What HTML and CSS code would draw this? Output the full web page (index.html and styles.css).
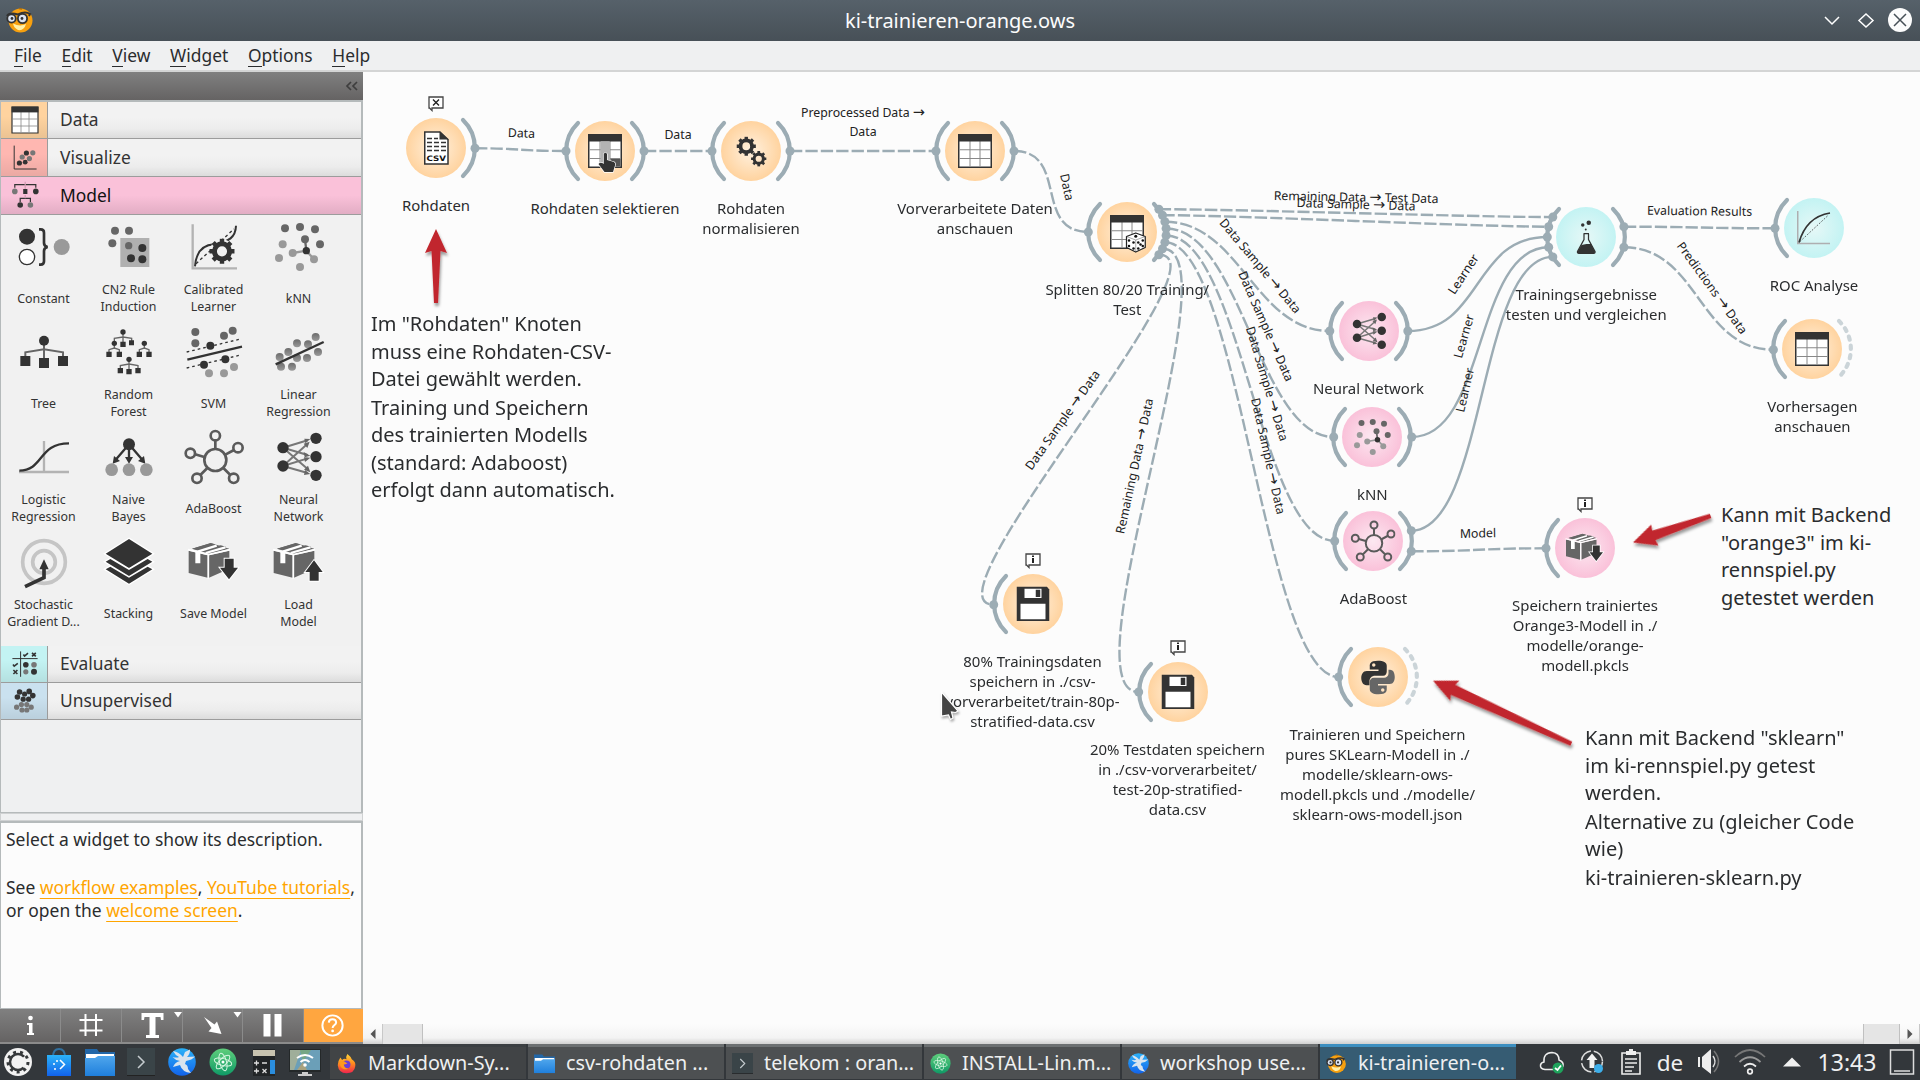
FILE: index.html
```html
<!DOCTYPE html>
<html lang="de">
<head>
<meta charset="utf-8">
<title>ki-trainieren-orange.ows</title>
<link rel="stylesheet" href="styles.css">
</head>
<body>
<svg class="defs" width="0" height="0" aria-hidden="true">
  <defs>
    <radialGradient id="g-data"><stop offset="0" stop-color="#fff1df"/><stop offset="1" stop-color="#ffd39f"/></radialGradient>
    <radialGradient id="g-model"><stop offset="0" stop-color="#fce8f1"/><stop offset="1" stop-color="#fac1d9"/></radialGradient>
    <radialGradient id="g-eval"><stop offset="0" stop-color="#e6f8f7"/><stop offset="1" stop-color="#c3f3f3"/></radialGradient>
    <linearGradient id="g-dot" x1="0" y1="0" x2="0" y2="1"><stop offset="0" stop-color="#6c6c6c"/><stop offset="1" stop-color="#9a9a9a"/></linearGradient>
    <linearGradient id="g-folder" x1="0" y1="0" x2="0" y2="1"><stop offset="0" stop-color="#4fa6ec"/><stop offset="1" stop-color="#1f7fdc"/></linearGradient>
    <linearGradient id="g-atom" x1="0" y1="0" x2="0" y2="1"><stop offset="0" stop-color="#5fce7c"/><stop offset="1" stop-color="#0f9a66"/></linearGradient>
    <linearGradient id="g-bird" x1="0" y1="0" x2="0" y2="1"><stop offset="0" stop-color="#2bb2f8"/><stop offset="1" stop-color="#1262ea"/></linearGradient>
    <linearGradient id="g-fox" x1="0" y1="0" x2="0" y2="1"><stop offset="0" stop-color="#ffd43a"/><stop offset=".5" stop-color="#ff8a1d"/><stop offset="1" stop-color="#f0254e"/></linearGradient>
    <filter id="shadow" x="-20%" y="-50%" width="140%" height="200%"><feDropShadow dx="1" dy="3" stdDeviation="1.5" flood-opacity=".4"/></filter>
  </defs>

  <symbol id="gear" viewBox="-50 -50 100 100"><circle r="29" fill="none" stroke-width="19" stroke="currentColor"/><g stroke="currentColor" stroke-width="17"><path d="M0-30V-48M0 30V48M-30 0H-48M30 0H48M-21-21-34-34M21 21 34 34M-21 21-34 34M21-21 34-34"/></g></symbol>

  <symbol id="i-constant" viewBox="-90 -90 180 180"><circle cx="-51" cy="-31" r="24" fill="#333"/><circle cx="-51" cy="30" r="23" fill="#fff" stroke="#333" stroke-width="4"/><path d="M-15-53H-10Q0-53 0-43V-12Q0-2 11 0 0 2 0 12V43Q0 53-10 53H-15" fill="none" stroke="#333" stroke-width="8"/><circle cx="53" r="24" fill="#999"/></symbol>
  <symbol id="i-cn2" viewBox="-90 -90 180 180"><path fill="#b0b0b0" d="M-26-27H61V60H-26z"/><g fill="#666"><circle cx="-42" cy="-49" r="12"/><circle cy="-49" r="12"/><circle cx="-50" cy="-11" r="12"/><circle cx="-1" cy="-4" r="11"/></g><g fill="#333"><circle cx="40" cy="3" r="12"/><circle cx="6" cy="34" r="12"/><circle cx="40" cy="37" r="12"/></g></symbol>
  <symbol id="i-calibrated" viewBox="-90 -90 180 180"><path d="M-64-68V64H69" fill="none" stroke="#b3b3b3" stroke-width="7"/><path d="M-54 50 60-54" stroke="#333" stroke-width="4" stroke-dasharray="9 8"/><path d="M-57 58Q-52-5 0-8C45-15 65-30 66-64" fill="none" stroke="#333" stroke-width="6"/><circle cx="24" cy="13" r="36" fill="#f1f1f1"/><use href="#gear" x="-15" y="-26" width="78" height="78" color="#333"/></symbol>
  <symbol id="i-knn" viewBox="-90 -90 180 180"><path d="M22 11 18-23" stroke="#666" stroke-width="7"/><path d="M-19 18 22 11 45 37" fill="none" stroke="#999" stroke-width="7"/><g fill="#666"><circle cx="-42" cy="-56" r="12"/><circle cx="3" cy="-60" r="12"/><circle cx="48" cy="-53" r="12"/><circle cx="18" cy="-23" r="12"/><circle cx="63" cy="-8" r="12"/></g><g fill="#999"><circle cx="-49" cy="-8" r="12"/><circle cx="-19" cy="18" r="12"/><circle cx="-60" cy="33" r="12"/><circle cx="45" cy="37" r="12"/><circle cx="3" cy="60" r="12"/></g><circle cx="22" cy="11" r="11" fill="#333"/></symbol>
  <symbol id="i-tree" viewBox="-90 -90 180 180"><path d="M-56 20V1L0-8 57 1V20M0-30V25" fill="none" stroke="#666" stroke-width="6"/><circle cy="-34" r="15" fill="#333"/><path fill="#333" d="M-71 12h30v30h-30zM-15 18h30v30h-30zM42 12h30v30h-30z"/></symbol>
  <symbol id="i-forest" viewBox="-90 -90 180 180"><path d="M-44-26V-41L-18-45 8-41V-26M-18-60V-25M-60 7V-7L-44-12-29-7V7M-44-26V-12M31 7V-7L46-12 60-7V7M46-26V-12M-26 56V41L0 36 27 41V56M0 22V56" fill="none" stroke="#666" stroke-width="4"/><g fill="#333"><circle cx="-18" cy="-60" r="8"/><circle cx="-44" cy="-26" r="8"/><circle cx="46" cy="-26" r="8"/><circle cy="22" r="8"/><path d="M-26-31h16v16h-16zM0-35h15v15H0zM-68-1h16v16h-16zM-37-1h16v16h-16zM23-1h16v16H23zM52-1h16v16H52zM-34 48h16v16h-16zM-8 51H8v16H-8zM19 48h16v16H19z"/></g></symbol>
  <symbol id="i-svm" viewBox="-90 -90 180 180"><path d="M-82 0 80-39M-82 48 80 9" stroke="#333" stroke-width="4" stroke-dasharray="8 9"/><path d="M-80 23 84-16" stroke="#333" stroke-width="7"/><g fill="#666"><circle cx="-56" cy="-60" r="12"/><circle cx="-56" cy="-26" r="12"/><circle cx="30" cy="-49" r="12"/><circle cx="56" cy="-64" r="12"/></g><g fill="#333"><circle cx="-11" cy="-19" r="12"/><circle cx="34" cy="22" r="12"/><circle cx="-30" cy="38" r="12"/></g><g fill="#999"><circle cx="60" cy="45" r="12"/><circle cx="-15" cy="64" r="12"/><circle cx="30" cy="64" r="12"/></g></symbol>
  <symbol id="i-linreg" viewBox="-90 -90 180 180"><g fill="url(#g-dot)"><circle cx="-58" cy="15" r="12"/><circle cx="-32" r="12"/><circle cx="-6" cy="-26" r="12"/><circle cx="27" cy="-23" r="12"/><circle cx="50" cy="-45" r="12"/><circle cx="57" r="12"/><circle cx="24" cy="18" r="12"/><circle cx="-6" cy="18" r="12"/><circle cx="-21" cy="44" r="12"/><circle cx="-54" cy="44" r="12"/></g><path d="M-70 37 74-30" stroke="#333" stroke-width="7"/></symbol>
  <symbol id="i-logreg" viewBox="-90 -90 180 180"><path d="M0-48V43M-75 45H75" stroke="#b3b3b3" stroke-width="7"/><path d="M-74 41C0 40-18-41 75-41" fill="none" stroke="#333" stroke-width="7"/></symbol>
  <symbol id="i-bayes" viewBox="-90 -90 180 180"><g stroke="#333" stroke-width="7"><path d="M0-38-38 6M0-38V6M0-38 38 6"/></g><g fill="#333"><circle cy="-38" r="18"/><path d="M-49 20-45-3-27 12zM0 20-12 0H12zM49 20 45-3 27 12z"/></g><g fill="#999"><circle cx="-52" cy="38" r="19"/><circle cy="38" r="19"/><circle cx="52" cy="38" r="19"/></g></symbol>
  <symbol id="i-ada" viewBox="-90 -90 180 180"><g fill="none" stroke="#5a5a5a" stroke-width="8"><circle cx="4" cy="9" r="33"/><circle cx="4" cy="-64" r="14"/><circle cx="72" cy="-28" r="14"/><circle cx="59" cy="64" r="14"/><circle cx="-51" cy="64" r="14"/><circle cx="-71" cy="-11" r="14"/><path d="M4-50V-24M60-21 34-7M49 54 28 33M-41 54-20 33M-57-8-29 0"/></g></symbol>
  <symbol id="i-neural" viewBox="-90 -90 180 180"><g stroke="#777" stroke-width="6"><path d="M-48-28 26-50M-48-28 26-6M-48-28 26 36M-48 27 24-38M-48 27 26 4M-48 27 26 48"/></g><path fill="#666" d="M34-54 16-55 19-41zM34-4 14-15 17 1zM34 46 27 26 15 38zM32-46 14-40 25-27zM34 2 15 1 18 15zM34 51 18 40 15 54z"/><g fill="#333"><circle cx="-48" cy="-28" r="17"/><circle cx="-48" cy="27" r="17"/><circle cx="51" cy="-56" r="17"/><circle cx="51" cy="-1" r="17"/><circle cx="51" cy="55" r="17"/></g></symbol>
  <symbol id="i-sgd" viewBox="-90 -90 180 180"><g fill="none" stroke="#c5c5c5" stroke-width="11"><circle r="64"/><circle r="34"/></g><path d="M-57 74 0 47V12" fill="none" stroke="#333" stroke-width="11"/><path fill="#333" d="M0-8 14 22H-14z"/></symbol>
  <symbol id="i-stack" viewBox="-90 -90 180 180"><path fill="#333" stroke="#fff" stroke-width="8" paint-order="stroke" d="M0 65-70 22-56 14 0 47 56 14 70 22zM0 42-70-1-56-9 0 24 56-9 70-1zM0-69 70-25 0 18-70-25z"/></symbol>
  <symbol id="i-box" viewBox="-90 -90 180 180"><path fill="#666" d="M-76-34-19-20V47L-76 33zM-15-20 46-34V20L-15 47zM-66-40-10-56 4-53-52-37zM-40-33 20-50 36-46-24-29z"/><path fill="#666" d="M-66-40-10-57 46-40-12-24z"/><path fill="#fff" d="M-56-32-41-28V4H-56z"/><path d="M-49-31 8-49M-25-27 34-44" stroke="#fff" stroke-width="7" fill="none"/><path d="M-17-22V50M-78-37-17-22 48-37" fill="none" stroke="#fff" stroke-width="5"/></symbol>
  <symbol id="i-save" viewBox="-90 -90 180 180"><use href="#i-box" x="-90" y="-90" width="180" height="180"/><path fill="#333" stroke="#fff" stroke-width="6" paint-order="stroke" d="M32-10H59V17H72L45 52 18 17H32z"/></symbol>
  <symbol id="i-load" viewBox="-90 -90 180 180"><use href="#i-box" x="-90" y="-90" width="180" height="180"/><path fill="#333" stroke="#fff" stroke-width="6" paint-order="stroke" d="M32 56H59V30H71L45-5 19 30H32z"/></symbol>
  <symbol id="i-table" viewBox="-90 -90 180 180"><path fill="#fff" stroke="#333" stroke-width="6" d="M-65-65H65V65H-65z"/><path d="M-62-5H62M-62 30H62M-20-40V62M20-40V62" stroke="#888" stroke-width="4"/><path fill="#333" d="M-67-67H67V-38H-67z"/></symbol>
  <symbol id="i-select" viewBox="-90 -90 180 180"><use href="#i-table" x="-90" y="-90" width="180" height="180"/><path fill="#b3b3b3" d="M-18-38H20V62H-18z"/><path fill="#555" d="M22 32H62V62H22z"/><path fill="#333" stroke="#fff" stroke-width="5" paint-order="stroke" d="M-5 12Q2 2 8 12V36L36 44Q43 48 40 58L32 84H-2L-26 52Q-18 42-5 52z"/></symbol>
  <symbol id="i-scatter" viewBox="-90 -90 180 180"><path d="M-54-57V60H58" fill="none" stroke="#333" stroke-width="5"/><g fill="#777"><circle cx="-14" r="13"/><circle cx="39" cy="-21" r="13"/><circle cx="22" cy="8" r="13"/></g><g fill="#333"><circle cx="-28" cy="30" r="13"/><circle cx="7" cy="-20" r="13"/><circle cx="1" cy="26" r="12"/></g></symbol>
  <symbol id="i-model" viewBox="-90 -90 180 180"><path d="M-51-36V-52H54V-36M-24 35V17H27V35" fill="none" stroke="#333" stroke-width="6"/><path d="M1-66V-30M1 0V16" stroke="#d59db5" stroke-width="6"/><g fill="#777"><circle cx="-51" cy="-18" r="14"/><circle cx="27" cy="50" r="14"/></g><g fill="#333"><circle cx="54" cy="-18" r="14"/><circle cx="-24" cy="50" r="14"/><path d="M-9-30H12V-5H-9z"/></g></symbol>
  <symbol id="i-evaluate" viewBox="-90 -90 180 180"><path d="M-22-63V64M-63-27H63" stroke="#333" stroke-width="5"/><path d="M-8-48-2-40 15-54M-60 3-54 11-36-3M35-56 54-38M54-56 35-38M-58 30-38 50M-38 30-58 50" fill="none" stroke="#333" stroke-width="8"/><g fill="#333"><circle cx="4" cy="4" r="14"/><circle cx="45" cy="39" r="15"/></g><g fill="#777"><circle cx="45" cy="4" r="14"/><circle cx="4" cy="39" r="13"/></g></symbol>
  <symbol id="i-unsup" viewBox="-90 -90 180 180"><g fill="#333"><circle cx="-27" cy="-45" r="14"/><circle cx="21" cy="-48" r="14"/><circle cx="-2" cy="-35" r="13"/><circle cx="39" cy="-27" r="14"/><circle cx="-38" cy="-20" r="14"/><circle cx="-9" cy="-9" r="13"/><circle cx="18" cy="-9" r="13"/></g><g fill="#777"><circle cx="-18" cy="18" r="13"/><circle cx="9" cy="18" r="13"/><circle cx="31" cy="31" r="13"/><circle cx="-42" cy="31" r="13"/><circle cx="-15" cy="45" r="13"/><circle cx="9" cy="45" r="13"/></g></symbol>
  <symbol id="i-csv" viewBox="-90 -90 180 180"><path fill="#fff" stroke="#333" stroke-width="6" d="M-45-64H16L48-34V64H-45z"/><path fill="#333" d="M14-66 50-34H14z"/><path d="M-36-38H8M-36-22H40M-36-6H40M-36 10H40" stroke="#333" stroke-width="6" stroke-dasharray="20 8"/></symbol>
  <symbol id="i-gears" viewBox="-90 -90 180 180"><use href="#gear" x="-59" y="-59" width="80" height="80" color="#333"/><use href="#gear" x="-1" y="-1" width="64" height="64" color="#333"/></symbol>
  <symbol id="i-split" viewBox="-90 -90 180 180"><use href="#i-table" x="-90" y="-90" width="180" height="180"/><path fill="#fff" stroke="#222" stroke-width="5" stroke-linejoin="round" d="M35 4 73 18V62L35 80-2 62V18z"/><path d="M-2 18 35 32 73 18M35 32V80" fill="none" stroke="#555" stroke-width="2"/><g fill="#111"><circle cx="35" cy="17" r="6"/><circle cx="8" cy="34" r="5"/><circle cx="26" cy="42" r="5"/><circle cx="8" cy="56" r="5"/><circle cx="26" cy="66" r="5"/><circle cx="45" cy="42" r="5"/><circle cx="63" cy="34" r="5"/><circle cx="54" cy="50" r="5"/><circle cx="45" cy="66" r="5"/><circle cx="63" cy="56" r="5"/></g></symbol>
  <symbol id="i-flask" viewBox="-90 -90 180 180"><path d="M-10-14H12M-8-12V10L-34 58Q-36 65-28 65H30Q38 65 36 58L10 10V-12" fill="none" stroke="#333" stroke-width="5"/><path fill="#333" d="M-18 32 2 28 20 28 36 58Q38 66 30 66H-28Q-36 66-34 58z"/><circle cx="-13" cy="-48" r="7" fill="#333"/><circle cx="11" cy="-57" r="9" fill="#333"/><circle cx="-1" cy="-30" r="4" fill="#333"/></symbol>
  <symbol id="i-roc" viewBox="-90 -90 180 180"><path d="M-65-68V62H64" fill="none" stroke="#aeaeb0" stroke-width="6"/><path d="M-56 54 56-50" stroke="#333" stroke-width="3" stroke-dasharray="7 6"/><path d="M-60 58Q-30-45 64-60" fill="none" stroke="#333" stroke-width="7"/></symbol>
  <symbol id="i-floppy" viewBox="-90 -90 180 180"><path fill="#333" d="M-65-69H56L65-58V68H-65z"/><path fill="#fff" d="M-34-61H34V-24H-34zM-50-1H50V61H-50z"/><path fill="#333" d="M11-57H29V-28H11z"/></symbol>
  <symbol id="i-python" viewBox="-90 -90 180 180"><path fill="#333" d="M0-65C-34-65-33-50-33-42V-30H2V-24H-45C-60-24-67-10-67 4S-60 33-46 33H-34V16C-34 4-24-5-12-5H20C30-5 35-13 35-22V-45C35-58 22-65 0-65zM-17-55A7 7 0 1 1-17-41 7 7 0 1 1-17-55z"/><path fill="#666" d="M2 69C36 69 35 54 35 46V34H0V28H47C62 28 67 14 67 0S62-29 48-29H42V-14C42-4 34 3 24 3H-16C-26 3-33 10-33 20V48C-33 61-22 69 2 69zM19 59A7 7 0 1 1 19 45 7 7 0 1 1 19 59z"/></symbol>

  <symbol id="arc-l" viewBox="-50 -47 100 94"><path d="M-27-28A39 39 0 0 0-27 28" fill="none" stroke="#9cacb4" stroke-width="4.2" stroke-linecap="round"/></symbol>
  <symbol id="arc-r" viewBox="-50 -47 100 94"><path d="M27-28A39 39 0 0 1 27 28" fill="none" stroke="#9cacb4" stroke-width="4.2" stroke-linecap="round"/></symbol>
  <symbol id="arc-open" viewBox="-50 -47 100 94"><path d="M27-28A39 39 0 0 1 27 28" fill="none" stroke="#cbd4d8" stroke-width="4.2" stroke-linecap="round" stroke-dasharray="3.2 6.1"/></symbol>
  <symbol id="bubble" viewBox="0 0 16 16"><path fill="#fff" stroke="#444" stroke-width="1.300" d="M1 1H15V12H4V14.500L1.500 12H1z"/></symbol>

  <symbol id="orange" viewBox="0 0 28 28"><circle cx="14.500" cy="14.500" r="12" fill="#f7a00f"/><path d="M13 2.500l3 .500" stroke="#a86c10" stroke-width="1.500"/><path d="M7 17.500Q14 21 20 18 18 25 12 24 8 22 7 17.500z" fill="#fff0a8"/><path d="M1 10Q3 6 12 8.500 19 5 24 8L23 10" fill="none" stroke="#333" stroke-width="2"/><circle cx="5.500" cy="12.500" r="4.200" fill="#dce4f2" stroke="#333" stroke-width="1.800"/><circle cx="16.500" cy="12.500" r="4.600" fill="#dce4f2" stroke="#333" stroke-width="1.800"/><circle cx="6" cy="12.500" r="1.400" fill="#333"/><circle cx="16" cy="12.500" r="1.400" fill="#333"/></symbol>
  <symbol id="folder" viewBox="0 0 30 28"><path fill="#2267a8" d="M0 1H12L14 4H30V14H0z"/><path fill="#fff" d="M1 6H29V12H1z"/><path fill="url(#g-folder)" d="M0 10H10L13 8H30V28H0z"/></symbol>
  <symbol id="term" viewBox="0 0 28 28"><path fill="#3a4448" d="M0 0H28V28H0z"/><path d="M0 27.500H28" stroke="#222"/><path d="M11 8 17 14 11 20" fill="none" stroke="#c5cccf" stroke-width="1.500"/></symbol>
  <symbol id="bird" viewBox="0 0 28 28"><circle cx="14" cy="14" r="13.800" fill="url(#g-bird)"/><path fill="#d9e4ee" d="M5 3Q11 4 15 9L17 4 22 1.500Q22 6 19 9L27 8.500Q24 12 18 13L17 16Q20 17 20 21L23 25Q14 24 12 17L5 19Q7 14 12 13 7 12 4.500 9 9 10 11 9 7 7 5 3z"/></symbol>
  <symbol id="atom" viewBox="0 0 28 28"><circle cx="14" cy="14" r="13.500" fill="url(#g-atom)"/><g fill="none" stroke="#d8f6e2" stroke-width="1"><ellipse cx="14" cy="14" rx="9" ry="3.500" transform="rotate(15 14 14)"/><ellipse cx="14" cy="14" rx="9" ry="3.500" transform="rotate(75 14 14)"/><ellipse cx="14" cy="14" rx="9" ry="3.500" transform="rotate(135 14 14)"/></g><circle cx="14" cy="14" r="1.500" fill="#fff"/></symbol>
  <symbol id="fox" viewBox="0 0 24 24"><path fill="url(#g-fox)" d="M13 1Q17 4 18 7 23 10 22 15 21 23 12 23 3 23 2 14 2 9 5 5L7 8Q9 6 12 7 11 4 13 1z"/><circle cx="12" cy="13" r="4.500" fill="#6b3fd6"/><path fill="#ff9a1e" d="M4 9Q9 8 13 12 11 13 9 13 9 17 14 18 8 20 5 15z"/></symbol>
</svg>

<header class="titlebar">
  <svg class="app-icon" viewBox="0 0 28 28"><use href="#orange"/></svg>
  <span class="title">ki-trainieren-orange.ows</span>
  <svg class="win-buttons" viewBox="0 0 100 30" fill="none" stroke="#fff" stroke-width="1.500"><path d="M9 12 16 19 23 12"/><path d="M50 9 57 15.500 50 22 43 15.500z"/><circle cx="84" cy="15" r="12" fill="#fcfcfc" stroke="none"/><path d="M78 9 90 21M90 9 78 21" stroke="#475057"/></svg>
</header>
<nav class="menubar"><span><u>F</u>ile</span><span><u>E</u>dit</span><span><u>V</u>iew</span><span><u>W</u>idget</span><span><u>O</u>ptions</span><span><u>H</u>elp</span></nav>

<main class="main">
  <aside class="sidebar">
    <div class="dock-head"><svg width="14" height="10" viewBox="0 0 14 10" fill="none" stroke="#3e3e3e" stroke-width="1.700"><path d="M6 1 2 5 6 9M12 1 8 5 12 9"/></svg></div>
    <div class="toolbox">
      <div class="cat cat-data"><i><svg><use href="#i-table"/></svg></i><b>Data</b></div>
      <div class="cat cat-vis"><i><svg><use href="#i-scatter"/></svg></i><b>Visualize</b></div>
      <div class="cat cat-model"><i><svg><use href="#i-model"/></svg></i><b>Model</b></div>
      <div class="grid">
        <div class="tool"><svg><use href="#i-constant"/></svg><p>Constant</p></div>
        <div class="tool"><svg><use href="#i-cn2"/></svg><p>CN2 Rule<br>Induction</p></div>
        <div class="tool"><svg><use href="#i-calibrated"/></svg><p>Calibrated<br>Learner</p></div>
        <div class="tool"><svg><use href="#i-knn"/></svg><p>kNN</p></div>
        <div class="tool"><svg><use href="#i-tree"/></svg><p>Tree</p></div>
        <div class="tool"><svg><use href="#i-forest"/></svg><p>Random<br>Forest</p></div>
        <div class="tool"><svg><use href="#i-svm"/></svg><p>SVM</p></div>
        <div class="tool"><svg><use href="#i-linreg"/></svg><p>Linear<br>Regression</p></div>
        <div class="tool"><svg><use href="#i-logreg"/></svg><p>Logistic<br>Regression</p></div>
        <div class="tool"><svg><use href="#i-bayes"/></svg><p>Naive<br>Bayes</p></div>
        <div class="tool"><svg><use href="#i-ada"/></svg><p>AdaBoost</p></div>
        <div class="tool"><svg><use href="#i-neural"/></svg><p>Neural<br>Network</p></div>
        <div class="tool"><svg><use href="#i-sgd"/></svg><p>Stochastic<br>Gradient D...</p></div>
        <div class="tool"><svg><use href="#i-stack"/></svg><p>Stacking</p></div>
        <div class="tool"><svg><use href="#i-save"/></svg><p>Save Model</p></div>
        <div class="tool"><svg><use href="#i-load"/></svg><p>Load<br>Model</p></div>
      </div>
      <div class="cat cat-eval"><i><svg><use href="#i-evaluate"/></svg></i><b>Evaluate</b></div>
      <div class="cat cat-unsup"><i><svg><use href="#i-unsup"/></svg></i><b>Unsupervised</b></div>
    </div>
    <div class="splitter"></div>
    <div class="help">
      <p>Select a widget to show its description.</p>
      <p class="gap">See <a>workflow examples</a>, <a>YouTube tutorials</a>,<br>or open the <a>welcome screen</a>.</p>
    </div>
    <div class="tools">
      <span><svg viewBox="0 0 60 33"><circle cx="30.500" cy="9" r="2.300" fill="#fff"/><path fill="#fff" d="M27 14H32.500V24H34V26H27V24H29V16H27z"/></svg></span>
      <span><svg viewBox="0 0 60 33"><path d="M24.500 5V27M35 5V27M18.500 11H41.500M18.500 21.500H41.500" stroke="#fff" stroke-width="2"/></svg></span>
      <span><svg viewBox="0 0 60 33"><path fill="#fff" d="M19.500 4H41.500V11H39L38.500 8H33.500V26H37V29H24V26H27.500V8H22.500L22 11H19.500zM52 3H60L56 8.500z"/></svg></span>
      <span><svg viewBox="0 0 60 33"><path fill="#fff" d="M50.500 3H58.500L54.500 8.500zM21 8 31.500 15.500 34 12.500 38.500 25 25.500 22.500 28.500 19z"/></svg></span>
      <span><svg viewBox="0 0 60 33"><path fill="#fff" d="M20.500 5H27.500V27.500H20.500zM31.500 5H38.500V27.500H31.500z"/></svg></span>
      <span class="hot"><svg viewBox="0 0 60 33"><circle cx="29" cy="16.500" r="10.300" fill="none" stroke="#fff" stroke-width="2"/><path d="M25.200 13.500Q25.500 10.200 29 10.200T32.700 13.400C32.700 16 29.100 16 29.100 19" fill="none" stroke="#fff" stroke-width="2"/><circle cx="29.100" cy="22" r="1.400" fill="#fff"/></svg></span>
    </div>
  </aside>

  <section class="canvas">
    <svg class="links" viewBox="363 72 1557 952">
      <g class="dashed">
        <path d="M475 148.300C520 148.300 521 151 566 151"/>
        <path d="M644 151H712"/>
        <path d="M790 151H936"/>
        <path d="M1014 151C1069 151 1033 232 1088.300 232"/>
        <path d="M1158.900 209.200C1234 209.200 1478 217.100 1552.800 217.100"/>
        <path d="M1162.500 215.200C1237 215.200 1474 226.700 1548.700 226.700"/>
        <path d="M1164.900 221.700C1240 221.700 1255 331 1329.800 331"/>
        <path d="M1166.100 228.500C1241 228.500 1259 437 1333.700 437"/>
        <path d="M1166.100 235.500C1241 235.500 1260 541 1334.700 541"/>
        <path d="M1164.900 242.300C1240 242.300 1264 677 1338.700 677"/>
        <path d="M1162.500 248.800C1237.500 248.800 1063.700 692 1138.700 692"/>
        <path d="M1158.900 254.800C1234 254.800 918.700 604.700 993.700 604.700"/>
        <path d="M1411.300 551.300C1478 551.300 1479 548.300 1546 548.300"/>
        <path d="M1623.900 226.700C1699 226.700 1700 228.300 1775 228.300"/>
        <path d="M1623.900 247.300C1699 247.300 1698.400 349.700 1773.400 349.700"/>
      </g>
      <g class="solid">
        <path d="M1407.800 331C1483 331 1472 237 1547.300 237"/>
        <path d="M1411.700 437C1487 437 1474 247.300 1548.700 247.300"/>
        <path d="M1411.300 530.700C1486 530.700 1478 256.900 1552.800 256.900"/>
      </g>
      <g class="dots">
        <circle cx="475" cy="148.300" r="4.500"/><circle cx="566" cy="151" r="4.500"/><circle cx="644" cy="151" r="4.500"/><circle cx="712" cy="151" r="4.500"/><circle cx="790" cy="151" r="4.500"/><circle cx="936" cy="151" r="4.500"/><circle cx="1014" cy="151" r="4.500"/><circle cx="1088.300" cy="232" r="4.500"/>
        <circle cx="1158.900" cy="209.200" r="4.500"/><circle cx="1162.500" cy="215.200" r="4.500"/><circle cx="1164.900" cy="221.700" r="4.500"/><circle cx="1166.100" cy="228.500" r="4.500"/><circle cx="1166.100" cy="235.500" r="4.500"/><circle cx="1164.900" cy="242.300" r="4.500"/><circle cx="1162.500" cy="248.800" r="4.500"/><circle cx="1158.900" cy="254.800" r="4.500"/>
        <circle cx="1552.800" cy="217.100" r="4.500"/><circle cx="1548.700" cy="226.700" r="4.500"/><circle cx="1547.300" cy="237" r="4.500"/><circle cx="1548.700" cy="247.300" r="4.500"/><circle cx="1552.800" cy="256.900" r="4.500"/>
        <circle cx="1329.800" cy="331" r="4.500"/><circle cx="1407.800" cy="331" r="4.500"/><circle cx="1333.700" cy="437" r="4.500"/><circle cx="1411.700" cy="437" r="4.500"/><circle cx="1334.700" cy="541" r="4.500"/><circle cx="1411.300" cy="530.700" r="4.500"/><circle cx="1411.300" cy="551.300" r="4.500"/><circle cx="1338.700" cy="677" r="4.500"/><circle cx="1138.700" cy="692" r="4.500"/><circle cx="993.700" cy="604.700" r="4.500"/><circle cx="1546" cy="548.300" r="4.500"/><circle cx="1623.900" cy="226.700" r="4.500"/><circle cx="1623.900" cy="247.300" r="4.500"/><circle cx="1775" cy="228.300" r="4.500"/><circle cx="1773.400" cy="349.700" r="4.500"/>
      </g>
      <g class="names">
        <text transform="translate(521.300 137.500) rotate(1.700)">Data</text>
        <text transform="translate(678 138.500)">Data</text>
        <text transform="translate(863 116.700)">Preprocessed Data <tspan>→</tspan></text>
        <text transform="translate(863 135.700)">Data</text>
        <text transform="translate(1062.800 188) rotate(78)">Data</text>
        <text transform="translate(1356 201.500) rotate(1.100)">Remaining Data <tspan>→</tspan> Test Data</text>
        <text transform="translate(1356 208.700) rotate(1.700)">Data Sample <tspan>→</tspan> Data</text>
        <text transform="translate(1257 268.700) rotate(50)">Data Sample <tspan>→</tspan> Data</text>
        <text transform="translate(1262 328) rotate(66.200)">Data Sample <tspan>→</tspan> Data</text>
        <text transform="translate(1263 385) rotate(73.200)">Data Sample <tspan>→</tspan> Data</text>
        <text transform="translate(1264 457) rotate(77.500)">Data Sample <tspan>→</tspan> Data</text>
        <text transform="translate(1066 422.500) rotate(-54.500)">Data Sample <tspan>→</tspan> Data</text>
        <text transform="translate(1138.700 467) rotate(-77.800)">Remaining Data <tspan>→</tspan> Data</text>
        <text transform="translate(1467 276.500) rotate(-56.600)">Learner</text>
        <text transform="translate(1468 337.500) rotate(-74)">Learner</text>
        <text transform="translate(1469 391) rotate(-77)">Learner</text>
        <text transform="translate(1478 537.500) rotate(-1.200)">Model</text>
        <text transform="translate(1699.500 215.300) rotate(.700)">Evaluation Results</text>
        <text transform="translate(1708.700 290.500) rotate(54)">Predictions <tspan>→</tspan> Data</text>
      </g>
      <g class="arrows" filter="url(#shadow)">
        <path transform="translate(436 229) rotate(90)" d="M0 0 24-11 22-4.500 74-2V2L22 4.500 24 11z"/>
        <path transform="translate(1633 542.500) rotate(-18.900)" d="M0 0 23-11 22-5 82-2.200V2.200L22 5 23 11z"/>
        <path transform="translate(1433 680.700) rotate(24.500)" d="M0 0 24-11 22-5.500 152-2.200V2.200L22 5.500 24 11z"/>
      </g>
    </svg>

    <div class="node n1"><svg viewBox="-50 -47 100 94"><circle r="30" fill="url(#g-data)"/><use href="#arc-r" x="-50" y="-47" width="100" height="94"/><use href="#i-csv" x="-22.500" y="-22.500" width="45" height="45"/><text class="csv" x=".2" y="12.700" text-anchor="middle" textLength="19.500" lengthAdjust="spacingAndGlyphs">CSV</text></svg><p>Rohdaten</p></div>
    <div class="node n2"><svg viewBox="-50 -47 100 94"><circle r="30" fill="url(#g-data)"/><use href="#arc-l" x="-50" y="-47" width="100" height="94"/><use href="#arc-r" x="-50" y="-47" width="100" height="94"/><use href="#i-select" x="-22.500" y="-22.500" width="45" height="45"/></svg><p>Rohdaten selektieren</p></div>
    <div class="node n3"><svg viewBox="-50 -47 100 94"><circle r="30" fill="url(#g-data)"/><use href="#arc-l" x="-50" y="-47" width="100" height="94"/><use href="#arc-r" x="-50" y="-47" width="100" height="94"/><use href="#i-gears" x="-22.500" y="-22.500" width="45" height="45"/></svg><p>Rohdaten<br>normalisieren</p></div>
    <div class="node n4"><svg viewBox="-50 -47 100 94"><circle r="30" fill="url(#g-data)"/><use href="#arc-l" x="-50" y="-47" width="100" height="94"/><use href="#arc-r" x="-50" y="-47" width="100" height="94"/><use href="#i-table" x="-22.500" y="-22.500" width="45" height="45"/></svg><p>Vorverarbeitete Daten<br>anschauen</p></div>
    <div class="node n5"><svg viewBox="-50 -47 100 94"><circle r="30" fill="url(#g-data)"/><use href="#arc-l" x="-50" y="-47" width="100" height="94"/><use href="#arc-r" x="-50" y="-47" width="100" height="94"/><use href="#i-split" x="-22.500" y="-22.500" width="45" height="45"/></svg><p>Splitten 80/20 Training/<br>Test</p></div>
    <div class="node n6"><svg viewBox="-50 -47 100 94"><circle r="30" fill="url(#g-model)"/><use href="#arc-l" x="-50" y="-47" width="100" height="94"/><use href="#arc-r" x="-50" y="-47" width="100" height="94"/><use href="#i-neural" x="-22.500" y="-22.500" width="45" height="45"/></svg><p>Neural Network</p></div>
    <div class="node n7"><svg viewBox="-50 -47 100 94"><circle r="30" fill="url(#g-model)"/><use href="#arc-l" x="-50" y="-47" width="100" height="94"/><use href="#arc-r" x="-50" y="-47" width="100" height="94"/><use href="#i-knn" x="-22.500" y="-22.500" width="45" height="45"/></svg><p>kNN</p></div>
    <div class="node n8"><svg viewBox="-50 -47 100 94"><circle r="30" fill="url(#g-model)"/><use href="#arc-l" x="-50" y="-47" width="100" height="94"/><use href="#arc-r" x="-50" y="-47" width="100" height="94"/><use href="#i-ada" x="-22.500" y="-22.500" width="45" height="45"/></svg><p>AdaBoost</p></div>
    <div class="node n9"><svg viewBox="-50 -47 100 94"><circle r="30" fill="url(#g-eval)"/><use href="#arc-l" x="-50" y="-47" width="100" height="94"/><use href="#arc-r" x="-50" y="-47" width="100" height="94"/><use href="#i-flask" x="-22.500" y="-22.500" width="45" height="45"/></svg><p>Trainingsergebnisse<br>testen und vergleichen</p></div>
    <div class="node n10"><svg viewBox="-50 -47 100 94"><circle r="30" fill="url(#g-eval)"/><use href="#arc-l" x="-50" y="-47" width="100" height="94"/><use href="#i-roc" x="-22.500" y="-22.500" width="45" height="45"/></svg><p>ROC Analyse</p></div>
    <div class="node n11"><svg viewBox="-50 -47 100 94"><circle r="30" fill="url(#g-data)"/><use href="#arc-l" x="-50" y="-47" width="100" height="94"/><use href="#arc-open" x="-50" y="-47" width="100" height="94"/><use href="#i-table" x="-22.500" y="-22.500" width="45" height="45"/></svg><p>Vorhersagen<br>anschauen</p></div>
    <div class="node n12"><svg viewBox="-50 -47 100 94"><circle r="30" fill="url(#g-data)"/><use href="#arc-l" x="-50" y="-47" width="100" height="94"/><use href="#i-floppy" x="-22.500" y="-22.500" width="45" height="45"/></svg><p>80% Trainingsdaten<br>speichern in ./csv-<br>vorverarbeitet/train-80p-<br>stratified-data.csv</p></div>
    <div class="node n13"><svg viewBox="-50 -47 100 94"><circle r="30" fill="url(#g-data)"/><use href="#arc-l" x="-50" y="-47" width="100" height="94"/><use href="#i-floppy" x="-22.500" y="-22.500" width="45" height="45"/></svg><p>20% Testdaten speichern<br>in ./csv-vorverarbeitet/<br>test-20p-stratified-<br>data.csv</p></div>
    <div class="node n14"><svg viewBox="-50 -47 100 94"><circle r="30" fill="url(#g-data)"/><use href="#arc-l" x="-50" y="-47" width="100" height="94"/><use href="#arc-open" x="-50" y="-47" width="100" height="94"/><use href="#i-python" x="-22.500" y="-22.500" width="45" height="45"/></svg><p>Trainieren und Speichern<br>pures SKLearn-Modell in ./<br>modelle/sklearn-ows-<br>modell.pkcls und ./modelle/<br>sklearn-ows-modell.json</p></div>
    <div class="node n15"><svg viewBox="-50 -47 100 94"><circle r="30" fill="url(#g-model)"/><use href="#arc-l" x="-50" y="-47" width="100" height="94"/><use href="#i-save" x="-22.500" y="-22.500" width="45" height="45"/></svg><p>Speichern trainiertes<br>Orange3-Modell in ./<br>modelle/orange-<br>modell.pkcls</p></div>

    <svg class="badge b1" viewBox="0 0 16 16"><use href="#bubble"/><path d="M5 3.500 11 9.500M11 3.500 5 9.500" stroke="#222" stroke-width="1.400"/></svg>
    <svg class="badge b2" viewBox="0 0 16 16"><use href="#bubble"/><path d="M8 2.500V4M8 5V10" stroke="#222" stroke-width="2"/></svg>
    <svg class="badge b3" viewBox="0 0 16 16"><use href="#bubble"/><path d="M8 2.500V4M8 5V10" stroke="#222" stroke-width="2"/></svg>
    <svg class="badge b4" viewBox="0 0 16 16"><use href="#bubble"/><path d="M8 2.500V4M8 5V10" stroke="#222" stroke-width="2"/></svg>

    <div class="note t1"><p>Im "Rohdaten" Knoten<br>muss eine Rohdaten-CSV-<br>Datei gewählt werden.</p><p>Training und Speichern<br>des trainierten Modells<br>(standard: Adaboost)<br>erfolgt dann automatisch.</p></div>
    <div class="note t2"><p>Kann mit Backend<br>"orange3" im ki-<br>rennspiel.py<br>getestet werden</p></div>
    <div class="note t3"><p>Kann mit Backend "sklearn"<br>im ki-rennspiel.py getest<br>werden.</p><p>Alternative zu (gleicher Code<br>wie)</p><p>ki-trainieren-sklearn.py</p></div>

    <svg class="cursor" viewBox="0 0 20 34"><path fill="#444" stroke="#fff" stroke-width="1.200" d="M1.500 1 18 20 15.500 21.500 11.500 21 13 27 10.500 28.500 8.500 24 1.500 25z"/></svg>

    <div class="scrollbar"><span class="step"><svg width="6" height="10" viewBox="0 0 6 10"><path fill="#555" d="M5.500 0V10L.500 5z"/></svg></span><span class="thumb"></span><span class="track"></span><span class="stub"></span><span class="step"><svg width="6" height="10" viewBox="0 0 6 10"><path fill="#555" d="M.500 0V10L5.500 5z"/></svg></span></div>
  </section>
</main>

<footer class="taskbar">
  <div class="launchers">
    <svg viewBox="0 0 28 28"><circle cx="14" cy="14" r="14" fill="#f2f2f2"/><circle cx="14" cy="14" r="10" fill="none" stroke="#35383a" stroke-width="3" stroke-dasharray="3 3.980"/><circle cx="14" cy="14" r="8" fill="none" stroke="#35383a" stroke-width="2.500" stroke-dasharray="38 12.270" transform="rotate(45 14 14)"/></svg>
    <svg viewBox="0 0 28 28"><path d="M8 9Q8 1 14 1T20 9" fill="none" stroke="#31709f" stroke-width="2"/><path fill="url(#g-bird)" d="M2 7H26V28H2z"/><path d="M15 12 19.500 16.500 15 21" fill="none" stroke="#fff" stroke-width="1.500"/><circle cx="9" cy="16" r="1" fill="#fff"/><circle cx="12" cy="13" r="1" fill="#fff"/><circle cx="10" cy="21" r="1" fill="#fff"/></svg>
    <svg class="wide" viewBox="0 0 30 28"><use href="#folder"/></svg>
    <svg viewBox="0 0 28 28"><use href="#term"/></svg>
    <svg viewBox="0 0 28 28"><use href="#bird"/></svg>
    <svg viewBox="0 0 28 28"><use href="#atom"/></svg>
    <svg viewBox="0 0 28 28"><path fill="#222527" d="M3 1H25V28H3z"/><path fill="#c8c3b0" d="M3 2H25V8H3z"/><path fill="#2b8ede" d="M20 12H25V26H20z"/><path d="M4 15H9M6.500 12.500V17.500M12 15H17M4 23H9M6.500 20.500V25.500M12.500 21 16.500 25M16.500 21 12.500 25" stroke="#ddd" stroke-width="1.300"/></svg>
    <svg class="wide" viewBox="0 0 32 28"><path fill="#242829" d="M0 1H32V24H0z"/><path fill="#6b9fb8" d="M1 2H31V22H1z"/><path fill="#9fae9a" d="M1 2H12L5 22H1z"/><path fill="#75a785" d="M11 2H22L14 14z"/><path fill="#a8a27f" d="M14 14 18 22H8z"/><path fill="none" stroke="#fff" stroke-width="2" d="M8 10Q16 4 24 10M11.500 14Q16 10 20.500 14"/><circle cx="16" cy="17" r="1.800" fill="#fff"/><path fill="#ccc" d="M9 26H23V28H9zM13 24H19V26H13z"/></svg>
  </div>
  <div class="task first"><svg viewBox="0 0 24 24"><use href="#fox"/></svg>Markdown-Sy...</div>
  <div class="task"><svg viewBox="0 0 30 28"><use href="#folder"/></svg>csv-rohdaten ...</div>
  <div class="task"><svg viewBox="0 0 28 28"><use href="#term"/></svg>telekom : oran...</div>
  <div class="task"><svg viewBox="0 0 28 28"><use href="#atom"/></svg>INSTALL-Lin.m...</div>
  <div class="task"><svg viewBox="0 0 28 28"><use href="#bird"/></svg>workshop use...</div>
  <div class="task active"><svg viewBox="0 0 28 28"><use href="#orange"/></svg>ki-trainieren-o...</div>
  <div class="tray">
    <svg viewBox="0 0 28 28"><path d="M7 21.500Q2 21 2.500 17 3 14.500 6 14 5 5 14 4.500 21 5 21 12 26 14 25 18 24 21 20 21.500z" fill="none" stroke="#eee" stroke-width="1.500"/><circle cx="20" cy="20" r="5.500" fill="#1fa35c"/><path d="M17 20 19.500 22 23 17.500" fill="none" stroke="#fff" stroke-width="1.800"/></svg>
    <svg viewBox="0 0 28 28"><circle cx="14" cy="13.500" r="10.500" fill="none" stroke="#ddd" stroke-width="1.500" stroke-dasharray="14 3"/><path fill="#f2f2f2" d="M14 5.500 19.500 12H16.500V20H11.500V12H8.500z"/><circle cx="20.500" cy="20.500" r="4.500" fill="#3daee9"/></svg>
    <svg viewBox="0 0 28 28"><path d="M5 5H23V26H5zM8 11H20M8 15H20M8 19H17M8 23H15" fill="none" stroke="#eee" stroke-width="1.600"/><path fill="#eee" d="M9 3H12V1H16V3H19V7H9z"/></svg>
    <span class="lang">de</span>
    <svg viewBox="0 0 28 28"><path fill="#eee" d="M3 9H5V19H3zM7 9 16 1V26L7 19z"/><path d="M18 8Q22 13.500 18 19" fill="none" stroke="#ddd" stroke-width="1.500"/><path d="M19 3Q28 13.500 19 24" fill="none" stroke="#777" stroke-width="1.500"/></svg>
    <svg class="wide" viewBox="-2 0 32 28" fill="none" stroke-width="1.700"><path d="M-1 9Q14-5 29 9" stroke="#777"/><path d="M3.500 14Q14 4.500 24.500 14" stroke="#999"/><path d="M8 18.500Q14 13 20 18.500" stroke="#eee"/><circle cx="14" cy="23.500" r="2.300" stroke="#eee"/></svg>
    <svg viewBox="0 0 28 28"><path fill="#f0f0f0" d="M5 18.500 14 9.500 23 18.500z"/></svg>
    <span class="clock">13:43</span>
    <svg viewBox="0 0 28 28"><path d="M2.500 2H25.500V26H2.500zM6 23H22" fill="none" stroke="#ddd" stroke-width="1.500"/></svg>
  </div>
</footer>
</body>
</html>
```
FILE: styles.css
```css
* { box-sizing: border-box; }
body { margin: 0; width: 1920px; height: 1080px; overflow: hidden; display: flex; flex-direction: column; background: #fcfcfc; color: #2a2c2e; font-family: "Noto Sans", "Liberation Sans", sans-serif; font-size: 17.4px; }
p { margin: 0; }
.defs { position: absolute; }
.csv { font: bold 7.5px "DejaVu Sans", sans-serif; fill: #111; }

.titlebar { flex: 0 0 41px; display: grid; grid-template-columns: 120px 1fr 120px; align-items: center; background: linear-gradient(#56616a, #475057); color: #fcfcfc; }
.app-icon { width: 28px; height: 28px; margin-left: 6px; margin-top: -1px; }
.title { font-size: 20px; text-align: center; line-height: 41px; }
.win-buttons { width: 100px; height: 30px; margin-left: 16px; margin-top: -1px; }

.menubar { flex: 0 0 31px; display: flex; gap: 19.7px; padding-left: 14px; line-height: 29px; background: #eff0f1; border-bottom: 2px solid #d4d5d5; }
.menubar u { text-decoration: none; box-shadow: inset 0 -1px #2a2c2e; display: inline-block; line-height: 24px; }

.main { flex: 0 0 972px; display: flex; }
.sidebar { flex: 0 0 363px; display: flex; flex-direction: column; background: #eff0f1; }
.dock-head { flex: 0 0 28px; background: linear-gradient(#808080, #656363); display: flex; align-items: center; justify-content: flex-end; padding-right: 4px; }
.toolbox { flex: 0 0 713px; border: 1px solid #b5babb; border-width: 2px 2px 1px 1px; display: flex; flex-direction: column; }
.cat { flex: 0 0 37px; display: flex; border-bottom: 1px solid #9c9c9c; background: linear-gradient(#f2f2f2 45%, #ececec 75%, #dcdcdc); line-height: 35px; }
.cat i { flex: 0 0 47px; border-right: 1px solid #9c9c9c; display: flex; padding-left: 4px; background: linear-gradient(transparent 40%, rgba(0,0,0,.08)); }
.cat i svg { width: 40px; height: 36px; }
.cat b { font-weight: 400; margin-left: 12px; color: #333; }
.cat-data i { background-color: #ffd39f; }
.cat-vis { line-height: 37px; }
.cat-vis i { background-color: #ffb7b1; }
.cat-model { flex-basis: 38px; background: linear-gradient(#fac1d9 50%, #e2adc4); line-height: 37px; }
.cat-model i { background: none; border-color: transparent; }
.cat-model b { color: #111; }
.cat-eval i { background-color: #c3f3f3; }
.cat-unsup i { background-color: #cae1ef; }
.grid { flex: 0 0 431px; background: #f1f1f1; display: grid; grid-template-columns: repeat(4, 85px); grid-auto-rows: 105px; padding-top: 2px; }
.tool { display: flex; flex-direction: column; align-items: center; text-align: center; font-size: 12.4px; line-height: 17px; color: #333; }
.tool svg { width: 60px; height: 60px; }
.tool p { height: 42px; display: flex; align-items: center; }
.splitter { flex: 0 0 8px; border: 1px solid #cfd1d2; }
.help { flex: 0 0 188px; border: 1px solid #b5babb; border-top-width: 2px; border-right-width: 2px; background: #fcfcfc; padding: 5px 0 0 5px; line-height: 23.6px; white-space: nowrap; font-size: 17.45px; }
.gap { padding-top: 24px; }
.help a { color: #ffa500; text-decoration: underline; text-underline-offset: 4px; text-decoration-thickness: 1px; text-decoration-skip-ink: none; }
.tools { flex: 0 0 35px; display: grid; grid-template-columns: 61px 61px 61px 60px 61px 59px; background: linear-gradient(#808080, #656363); border-bottom: 2px solid #8b8b8b; }
.tools span { border-right: 1px solid #8b8b8b; height: 33px; }
.tools svg { display: block; width: 60px; height: 33px; }
.tools .hot { background: #ffa640; border: 0; }
.tools .hot svg { width: 59px; }

.canvas { position: relative; flex: 1; background: #fcfcfc; display: flex; flex-direction: column; }
.links { width: 1557px; height: 952px; display: block; }
.dashed path { fill: none; stroke: #9cacb4; stroke-width: 2.4; stroke-dasharray: 12.300 3.100; }
.solid path { fill: none; stroke: #9cacb4; stroke-width: 2.4; }
.dots { fill: #9cacb4; }
.names { font-size: 12.3px; text-anchor: middle; fill: #222; }
.names tspan { font-family: "DejaVu Sans", sans-serif; font-size: 14.500px; }
.arrows { fill: #c1272d; }

.node { position: absolute; width: 200px; margin: -47px 0 0 -100px; display: flex; flex-direction: column; align-items: center; text-align: center; font-size: 14.95px; line-height: 20px; white-space: nowrap; }
.node svg { width: 100px; height: 94px; }
.n1 { left: 73px; top: 76.300px; }
.n2 { left: 242px; top: 79px; }
.n3 { left: 388px; top: 79px; }
.n4 { left: 612px; top: 79px; }
.n5 { left: 764.300px; top: 160px; }
.n6 { left: 1005.500px; top: 259px; }
.n7 { left: 1009.300px; top: 365px; }
.n8 { left: 1010.400px; top: 469px; }
.n9 { left: 1223.300px; top: 165px; }
.n10 { left: 1451px; top: 156.300px; }
.n11 { left: 1449.400px; top: 277.400px; }
.n12 { left: 669.500px; top: 532.400px; }
.n13 { left: 814.500px; top: 620px; }
.n14 { left: 1014.500px; top: 605px; }
.n15 { left: 1222px; top: 476.300px; }

.badge { position: absolute; width: 16px; height: 16px; }
.b1 { left: 65px; top: 24px; }
.b2 { left: 662px; top: 480.500px; }
.b3 { left: 807px; top: 567.500px; }
.b4 { left: 1214px; top: 424.500px; }

.note { position: absolute; font-size: 20px; line-height: 27.5px; white-space: nowrap; }
.note p + p { margin-top: 1px; }
.t1 { left: 8px; top: 238px; }
.t2 { left: 1358px; top: 429px; }
.t3 { left: 1222px; top: 652px; }
.cursor { position: absolute; left: 577px; top: 619px; width: 20px; height: 34px; filter: drop-shadow(1px 2px 1px rgba(0,0,0,.3)); }

.scrollbar { flex: 0 0 20px; display: flex; background: linear-gradient(#fcfcfc, #f3f3f3 70%, #d0d0d0); }
.step { flex: 0 0 20px; display: flex; align-items: center; justify-content: center; border-right: 1px solid #c8c8c8; }
.thumb { flex: 0 0 40px; background: #e5e5e5; border-right: 1px solid #c0c0c0; }
.track { flex: 1; }
.stub { flex: 0 0 37px; background: #e5e5e5; border: solid #c0c0c0; border-width: 0 1px; }

.taskbar { flex: 0 0 36px; display: flex; gap: 2px; background: #33373b; color: #eff0f1; font-size: 19.8px; }
.launchers { flex: 0 0 328px; display: flex; align-items: center; gap: 13px; padding-left: 4px; }
.launchers svg { width: 28px; height: 28px; }
.launchers .wide { width: 32px; margin: 0 -2px; }
.task { flex: 0 0 196px; display: flex; align-items: center; gap: 11px; padding-left: 6px; margin-bottom: 1px; border-top: 3px solid #6b6f71; background: #4d5052; line-height: 30px; white-space: nowrap; }
.task svg { width: 21px; height: 21px; }
.task.first { background: #414446; border-color: #3b3f42; }
.task.active { background: #365c73; border-color: #3d8fc0; }
.tray { flex: 1; display: flex; align-items: center; justify-content: space-between; padding: 0 4px 0 20px; }
.tray svg { width: 28px; height: 28px; }
.tray .wide { width: 32px; }
.lang { font-size: 22.500px; }
.clock { font-size: 23px; }
```
